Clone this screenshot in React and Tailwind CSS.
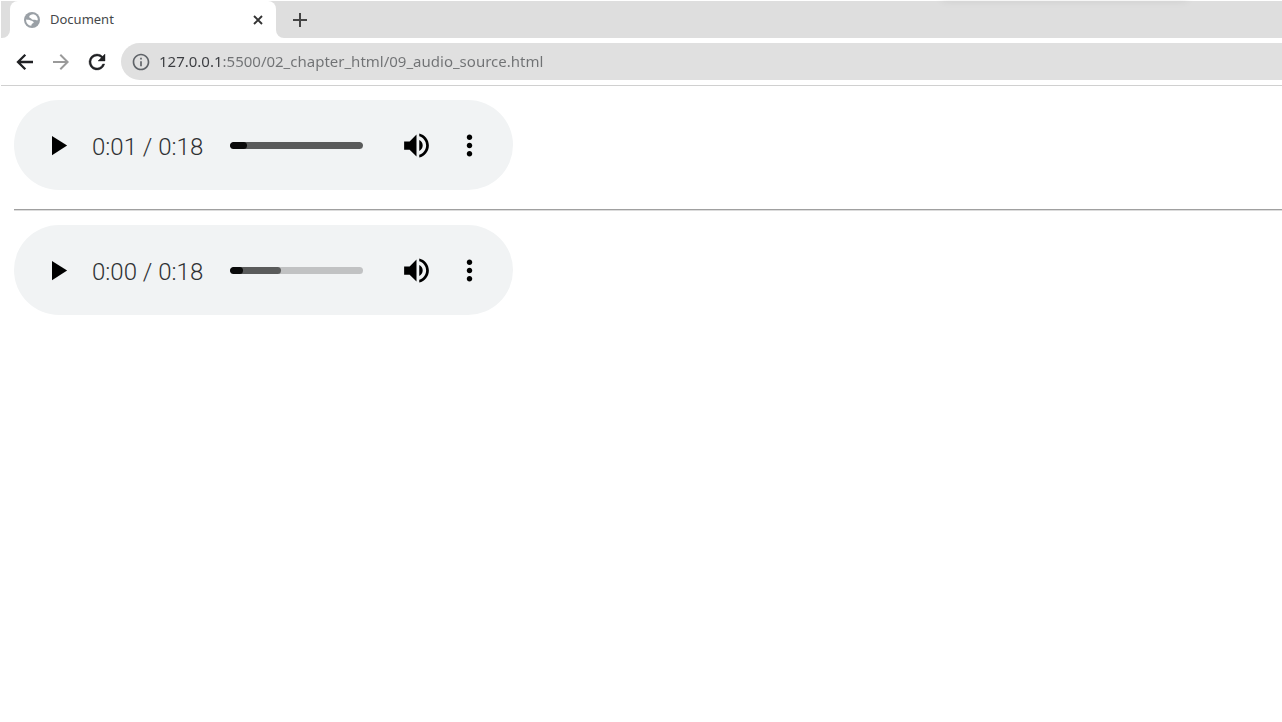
import { useState } from "react";
import {
  MdAdd,
  MdArrowForward,
  MdInfoOutline,
  MdMoreVert,
  MdPlayArrow,
  MdVolumeUp,
} from "react-icons/md";

const players = [
  { id: 1, time: "0:01", duration: "0:18", played: 13, buffered: 100 },
  { id: 2, time: "0:00", duration: "0:18", played: 10, buffered: 38 },
];

const GlobeIcon = () => (
  <svg width="16" height="16" viewBox="0 0 16 16" aria-hidden="true">
    <circle cx="8" cy="8" r="8" fill="#9aa0a6" />
    <path
      d="M9.4 2.2C7.400 2.400 5.200 3.200 5.200 4.700c0 1.400 1.600 1.100 2.200 2 .5.9 1.500 1.300 2.700 1.100 1.300-.2 1.900.8 3.700.5A6 6 0 0 0 9.400 2.200zM2 7.600c1.500.5 3.200.2 4.700.8 1.200.5 3 .8 3 1.900 0 1.200-1.600 1-2 2-.3.7-.1 1.300-.6 1.500A6 6 0 0 1 2 7.600z"
      fill="#fff"
    />
  </svg>
);

const CloseIcon = () => (
  <svg width="16" height="16" viewBox="0 0 16 16" aria-hidden="true">
    <path d="M4 4l8 8M12 4l-8 8" stroke="currentColor" strokeWidth="1.9" />
  </svg>
);

const BackIcon = () => (
  <svg width="24" height="24" viewBox="0 0 24 24" aria-hidden="true">
    <path
      d="M20 12H5.500M12.300 4.700L5 12l7.300 7.300"
      fill="none"
      stroke="currentColor"
      strokeWidth="2.3"
    />
  </svg>
);

const ReloadIcon = () => (
  <svg width="24" height="24" viewBox="0 0 24 24" aria-hidden="true">
    <path
      d="M17.650 6.350A7.960 7.960 0 0 0 12 4a8 8 0 1 0 7.730 10h-2.080A6 6 0 1 1 12 6c1.660 0 3.140.69 4.220 1.780L13 11h7V4l-2.350 2.350z"
      fill="currentColor"
      stroke="currentColor"
      strokeWidth="0.4"
    />
  </svg>
);

const TabStrip = () => (
  <div className="flex h-[37px]">
    <div className="w-[9px] rounded-br-lg bg-[#dedede]" />
    <div className="w-[266px] bg-[#dedede]">
      <div className="flex h-full items-center rounded-t-lg bg-white pl-[14px] pr-[10px]">
        <GlobeIcon />
        <span className="ml-[10px] flex-1 text-[13px] text-[#45474a]">
          Document
        </span>
        <button aria-label="Close tab" className="text-[#333]">
          <CloseIcon />
        </button>
      </div>
    </div>
    <div className="flex flex-1 items-center rounded-bl-lg bg-[#dedede] pl-3">
      <button aria-label="New tab" className="text-[#444]">
        <MdAdd size={24} />
      </button>
    </div>
  </div>
);

const Toolbar = () => {
  const [url, setUrl] = useState(
    "127.0.0.1:5500/02_chapter_html/09_audio_source.html"
  );

  return (
    <div className="flex items-center gap-3 border-b border-[#d0d0d0] pb-[5px] pl-3 pt-[5px]">
      <button aria-label="Back" className="text-[#202124]">
        <BackIcon />
      </button>
      <button aria-label="Forward" className="text-[#9a9a9a]">
        <MdArrowForward size={24} />
      </button>
      <button aria-label="Reload" className="text-[#202124]">
        <ReloadIcon />
      </button>
      <div className="flex h-[37px] flex-1 items-center rounded-l-full bg-[#e0e0e0] pl-[10px]">
        <MdInfoOutline size={20} className="text-[#5f6368]" />
        {/* host is darker than the path */}
        <input
          type="text"
          aria-label="Address"
          value={url}
          onChange={(e) => setUrl(e.target.value)}
          className="ml-2 flex-1 bg-[linear-gradient(90deg,#3a3c40_63px,#707274_63px)] bg-clip-text text-[15px] text-transparent caret-black focus:outline-none"
        />
      </div>
    </div>
  );
};

const AudioPlayer = ({ time, duration, played, buffered }) => {
  const [position, setPosition] = useState(played);

  return (
    <div className="flex h-[90px] w-[499px] items-center rounded-full bg-[#f1f3f4] px-[27px] text-black">
      <button aria-label="Play">
        <MdPlayArrow size={33} />
      </button>
      <span className="ml-[18px] w-[138px] pt-1 font-[Roboto,sans-serif] text-[24px] font-light text-[#2f3133]">
        {time} / {duration}
      </span>
      <div className="relative h-[7px] flex-1 overflow-hidden rounded-full bg-[#c1c2c3]">
        <div
          className="absolute inset-y-0 left-0 rounded-full bg-[#5a5b5b]"
          style={{ width: `${buffered}%` }}
        />
        <div
          className="absolute inset-y-0 left-0 rounded-full bg-[#0a0a0a]"
          style={{ width: `${position}%` }}
        />
        <input
          type="range"
          aria-label="Seek"
          min="0"
          max="100"
          value={position}
          onChange={(e) => setPosition(Number(e.target.value))}
          className="absolute inset-0 w-full cursor-pointer opacity-0"
        />
      </div>
      <button aria-label="Mute" className="ml-[37px]">
        <MdVolumeUp size={33} />
      </button>
      <button aria-label="More options" className="ml-5">
        <MdMoreVert size={33} />
      </button>
    </div>
  );
};

const App = () => {
  return (
    <div className="relative min-h-screen overflow-hidden bg-white pl-px pt-px font-['Noto_Sans',sans-serif]">
      <TabStrip />
      <Toolbar />

      <main className="pl-[13px] pt-[14px]">
        <AudioPlayer {...players[0]} />
        <hr className="mb-[14px] mt-[19px] border-b border-t border-b-[#dcdcdc] border-t-[#a0a0a0]" />
        <AudioPlayer {...players[1]} />
      </main>

      {/* faint shadow of the window above */}
      <div className="absolute -top-1 right-[95px] h-1 w-[245px] shadow-[0_0_8px_rgba(0,0,0,0.12)]" />
    </div>
  );
};

export default App;
